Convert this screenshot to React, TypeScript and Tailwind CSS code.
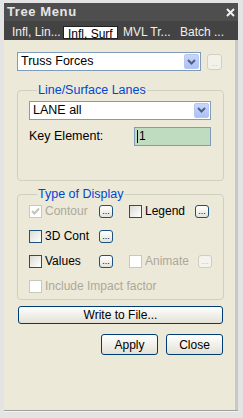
import React from "react";

const font = { fontFamily: '"Liberation Sans", Arial, sans-serif' };

function DropArrow() {
    return (
        <span className="flex items-center justify-center w-[15px] h-[15px] rounded-[2px] bg-gradient-to-b from-[#c8d6fb] to-[#aec1f3] border border-[#b6c7f2]">
            <svg width="9" height="6" viewBox="0 0 9 6">
                <path d="M1 1 L4.5 4.5 L8 1" stroke="#4d6185" strokeWidth="2" fill="none" />
            </svg>
        </span>
    );
}

function Combo({ text, className }: { text: string; className: string }) {
    return (
        <div className={`flex items-center justify-between bg-white border border-[#7f9db9] pl-[3px] pr-[1px] ${className}`}>
            <span className="text-[12.5px] text-black leading-none">{text}</span>
            <DropArrow />
        </div>
    );
}

function Dots({ disabled }: { disabled?: boolean }) {
    return (
        <span
            className={`flex items-end justify-center w-[14px] h-[13px] rounded-[3px] border text-[9px] leading-[9px] pb-[1px] ${disabled
                ? "border-[#cfcdc0] text-[#c4c2b5] bg-[#f4f3ee]"
                : "border-[#1c5180] text-black bg-gradient-to-b from-white to-[#e6e4da]"
                }`}
        >
            ...
        </span>
    );
}

function Check({ label, checked, disabled }: { label: string; checked?: boolean; disabled?: boolean }) {
    return (
        <span className="flex items-center gap-[3px]">
            <span
                className={`flex items-center justify-center w-[13px] h-[13px] border ${disabled
                    ? "border-[#cac8bb] bg-white"
                    : "border-[#1c5180] bg-gradient-to-br from-[#dcdcd6] to-white"
                    }`}
            >
                {checked && (
                    <svg width="9" height="9" viewBox="0 0 9 9">
                        <path d="M1 4 L3.5 6.5 L8 1.5" stroke="#c4c2b5" strokeWidth="2" fill="none" />
                    </svg>
                )}
            </span>
            <span className={`text-[12px] leading-none ${disabled ? "text-[#aca899]" : "text-black"}`}>{label}</span>
        </span>
    );
}

function XpButton({ label, className }: { label: string; className: string }) {
    return (
        <button className={`flex items-center justify-center border border-[#003c74] rounded-[3px] bg-gradient-to-b from-white to-[#e3e1d6] text-[12px] text-black leading-none ${className}`}>
            {label}
        </button>
    );
}

export default function App() {
    return (
        <div style={font} className="w-[243px] h-[418px] bg-[#e4e4e4] pt-[3px] pl-[4px] pr-[5px] pb-[6px] flex flex-col">
            {/* Title */}
            <div className="h-[18px] bg-[#4e4e4e] flex items-center justify-between pl-[3px] pr-[3px]">
                <span className="text-[13px] font-bold text-[#e6e6e6] tracking-[0.6px]">Tree Menu</span>
                <svg width="9" height="9" viewBox="0 0 9 9">
                    <path d="M1 1 L8 8 M8 1 L1 8" stroke="#f2f2f2" strokeWidth="2" />
                </svg>
            </div>

            {/* Tabs */}
            <div className="h-[19px] bg-[#434343] flex items-end text-[12px] leading-none pb-[1px]">
                <span className="ml-[8px] w-[51px] text-[#f0f0f0] pb-[1px]">Infl, Lin...</span>
                <span className="w-[55px] h-[13px] bg-white text-black border border-[#222] pl-[4px] pt-[1px]">Infl, Surf</span>
                <span className="ml-[5px] w-[57px] text-[#f0f0f0] pb-[1px]">MVL Tr...</span>
                <span className="text-[#f0f0f0] pb-[1px]">Batch ...</span>
            </div>

            {/* Content */}
            <div className="flex-1 bg-[#ece9d8] border-r-[3px] border-[#c8c8c8] pl-[13px] pt-[12px] flex flex-col">
                <div className="flex items-center gap-[6px]">
                    <Combo text="Truss Forces" className="w-[184px] h-[19px]" />
                    <span className="w-[15px] h-[16px] rounded-[3px] border border-[#d2d0c4] bg-[#f2f1ea] text-[8px] text-[#c4c2b5] flex items-end justify-center pb-[1px] leading-none">...</span>
                </div>

                <fieldset className="mt-[13px] w-[207px] h-[97px] border border-[#d0d0bf] rounded-[4px] pl-[11px] pr-[12px]">
                    <legend className="text-[12.5px] text-[#0046d5] ml-[8px] px-[1px] leading-none">Line/Surface Lanes</legend>
                    <Combo text="LANE all" className="mt-[4px] h-[19px]" />
                    <div className="mt-[7px] flex items-center justify-between">
                        <span className="text-[12.5px] text-black">Key Element:</span>
                        <span className="w-[77px] h-[19px] bg-[#c0dcc0] border border-[#7f9db9] flex items-center pl-[2px] text-[12px] text-black">
                            <span className="w-px h-[13px] bg-black mr-[1px]" />1
                        </span>
                    </div>
                </fieldset>

                <fieldset className="mt-[7px] w-[207px] h-[112px] border border-[#d0d0bf] rounded-[4px] pl-[11px]">
                    <legend className="text-[12.5px] text-[#0046d5] ml-[8px] px-[1px] leading-none">Type of Display</legend>
                    <div className="grid grid-cols-[70px_30px_66px_14px] items-center gap-y-[12px] mt-[4px]">
                        <Check label="Contour" checked disabled />
                        <Dots />
                        <Check label="Legend" />
                        <Dots />
                        <Check label="3D Cont" />
                        <Dots />
                        <span />
                        <span />
                        <Check label="Values" />
                        <Dots />
                        <Check label="Animate" disabled />
                        <span className="ml-[3px]"><Dots disabled /></span>
                        <span className="col-span-4"><Check label="Include Impact factor" disabled /></span>
                    </div>
                </fieldset>

                <XpButton label="Write to File..." className="mt-[6px] w-[205px] h-[18px] ml-[1px]" />
                <div className="mt-[10px] w-[205px] ml-[1px] flex justify-end gap-[8px]">
                    <XpButton label="Apply" className="w-[57px] h-[21px]" />
                    <XpButton label="Close" className="w-[57px] h-[21px]" />
                </div>
            </div>
            <div className="h-[2px] bg-[#f4f4f4] border-t border-[#a0a0a0]" />
        </div>
    );
}
